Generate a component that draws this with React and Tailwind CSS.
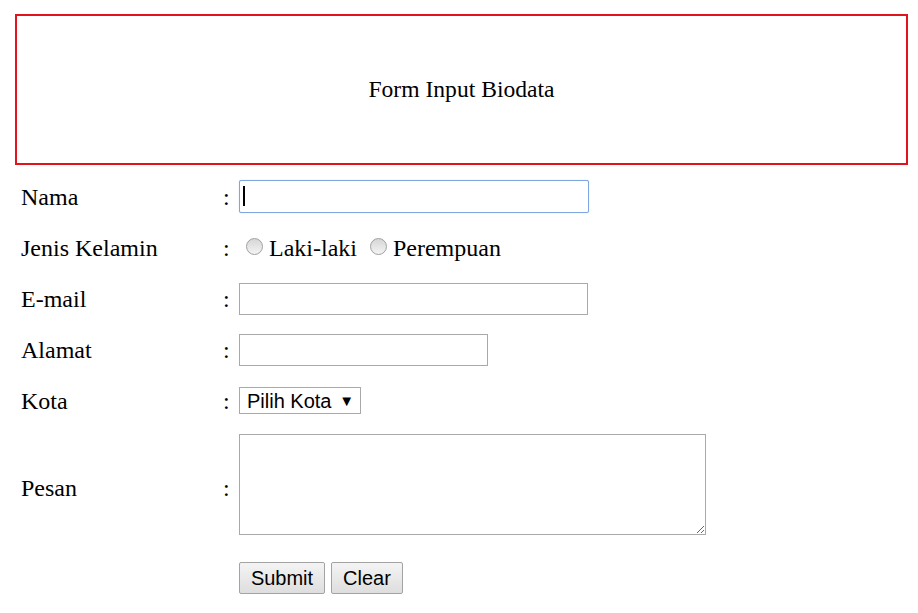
export default function App() {
  const label = "w-[202px] shrink-0";
  const colon = "w-[16px] shrink-0";
  const field = "border border-[#a9a9a9] bg-white px-[3px] outline-none";

  return (
    <div className="min-h-screen bg-white text-black font-['Liberation_Serif',serif] text-[24px]">
      <div className="ml-[15px] mr-[10px] mt-[14px] h-[151px] border-2 border-[#e0141c] flex items-center justify-center">
        <span className="text-[23.6px]">Form Input Biodata</span>
      </div>

      <form className="mt-[6px] pl-[21px] flex flex-col">
        <div className="h-[51px] flex items-center">
          <div className={label}>Nama</div>
          <div className={colon}>:</div>
          <div className="relative">
            <input type="text" className="w-[350px] h-[33px] border border-[#7da7de] rounded-[2px] bg-white px-[3px] outline-none shadow-[0_0_1px_#9cc0ee]" />
            <span className="absolute left-[4px] top-[7px] w-[2px] h-[20px] bg-black"></span>
          </div>
        </div>

        <div className="h-[51px] flex items-center">
          <div className={label}>Jenis Kelamin</div>
          <div className={colon}>:</div>
          <label className="flex items-center ml-[7px]">
            <span className="w-[17px] h-[17px] rounded-full border border-[#a0a0a0] bg-gradient-to-b from-[#d6d6d6] to-[#f4f4f4] mr-[6px] mb-[3px]"></span>
            Laki-laki
          </label>
          <label className="flex items-center ml-[13px]">
            <span className="w-[17px] h-[17px] rounded-full border border-[#a0a0a0] bg-gradient-to-b from-[#d6d6d6] to-[#f4f4f4] mr-[6px] mb-[3px]"></span>
            Perempuan
          </label>
        </div>

        <div className="h-[51px] flex items-center">
          <div className={label}>E-mail</div>
          <div className={colon}>:</div>
          <input type="text" className={`${field} w-[349px] h-[32px]`} />
        </div>

        <div className="h-[51px] flex items-center">
          <div className={label}>Alamat</div>
          <div className={colon}>:</div>
          <input type="text" className={`${field} w-[249px] h-[32px]`} />
        </div>

        <div className="h-[51px] flex items-center">
          <div className={label}>Kota</div>
          <div className={colon}>:</div>
          <div className="w-[122px] h-[27px] border border-[#a9a9a9] bg-white flex items-center pl-[7px] pr-[6px] font-['Liberation_Sans',Arial,sans-serif] text-[20px] leading-none">
            <span>Pilih Kota</span>
            <span className="ml-auto text-[15px]">▼</span>
          </div>
        </div>

        <div className="pt-[8px] flex items-center">
          <div className={`${label} pt-[6px]`}>Pesan</div>
          <div className={`${colon} pt-[6px]`}>:</div>
          <textarea className={`${field} w-[467px] h-[101px] block`}></textarea>
        </div>

        <div className="mt-[27px] flex items-center">
          <div className={label}></div>
          <div className={colon}></div>
          <div className="flex gap-[6px] font-['Liberation_Sans',Arial,sans-serif] text-[20px]">
            <button type="button" className="w-[86px] h-[32px] border border-[#a3a3a3] rounded-[2px] bg-gradient-to-b from-[#f4f4f4] to-[#dedede] leading-none">Submit</button>
            <button type="button" className="w-[72px] h-[32px] border border-[#a3a3a3] rounded-[2px] bg-gradient-to-b from-[#f4f4f4] to-[#dedede] leading-none">Clear</button>
          </div>
        </div>
      </form>
    </div>
  );
}
